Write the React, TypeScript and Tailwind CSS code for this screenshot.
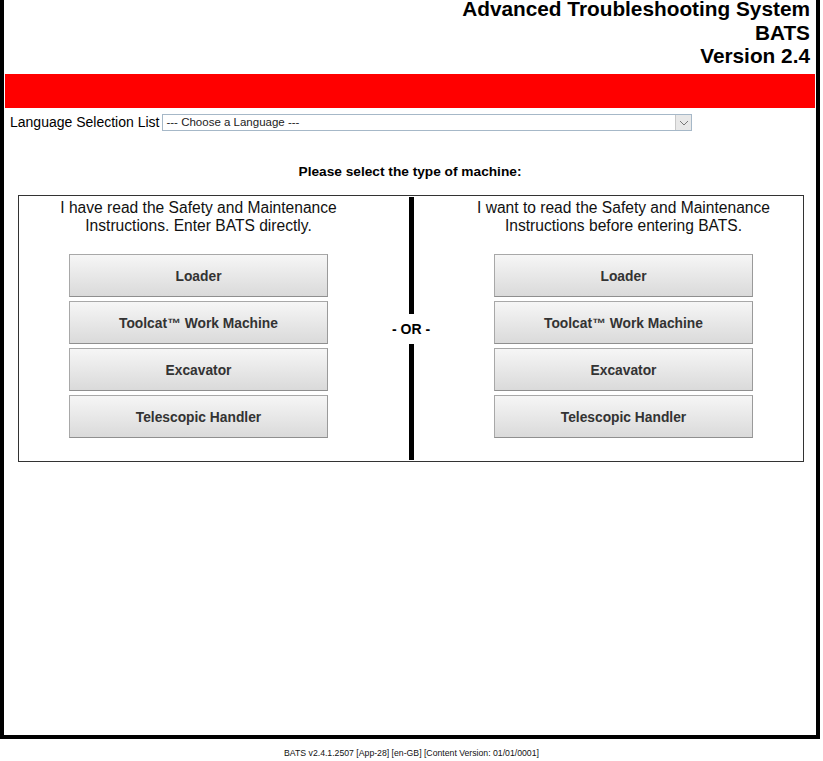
import React from 'react';

const MACHINES = ['Loader', 'Toolcat™ Work Machine', 'Excavator', 'Telescopic Handler'];

const MachineButton = ({ label }: { label: string }) => (
  <button
    type="button"
    className="w-[259px] h-[43px] pt-[3px] border border-[#a8a8a8] border-b-[#8f8f8f] border-r-[#9a9a9a] bg-gradient-to-b from-[#f6f6f6] to-[#dadada] text-[13.8px] font-bold text-[#333]"
  >
    {label}
  </button>
);

const Column = ({ lines }: { lines: [string, string] }) => (
  <div className="flex-1 flex flex-col items-center pt-[3px]">
    <p className="text-[15.6px] leading-[18px] text-[#111] text-center">
      {lines[0]}
      <br />
      {lines[1]}
    </p>
    <div className="mt-[19px] flex flex-col gap-[4px]">
      {MACHINES.map((m) => (
        <MachineButton key={m} label={m} />
      ))}
    </div>
  </div>
);

export default function App() {
  return (
    <div className="w-[823px] h-[761px] bg-white font-['Liberation_Sans',Arial,sans-serif] text-black">
      <div className="w-[820px] h-[739px] border-l-4 border-r-4 border-b-4 border-black flex flex-col">
        {/* title block */}
        <div className="h-[74px] pr-[6px] text-right text-[20.8px] font-bold leading-[23.5px]">
          <div className="leading-[18.5px]">Advanced Troubleshooting System</div>
          <div className="mt-[2px]">BATS</div>
          <div>Version 2.4</div>
        </div>
        <div className="h-[34px] mx-px bg-[#ff0000]" />

        {/* language picker */}
        <div className="flex items-center pl-[6px] pt-[6px] gap-[3px]">
          <span className="text-[14px] leading-[17px]">Language Selection List</span>
          <div className="w-[530px] h-[17px] border border-[#a6b8c8] flex items-center">
            <span className="flex-1 pl-[3px] text-[11.5px] leading-[15px] text-[#222]">--- Choose a Language ---</span>
            <span className="w-[16px] h-[15px] bg-[#e8e8e8] border-l border-[#c8c8c8] flex items-center justify-center">
              <svg width="10" height="6" viewBox="0 0 10 6" fill="none">
                <path d="M1 1l4 4 4-4" stroke="#777" strokeWidth="1" />
              </svg>
            </span>
          </div>
        </div>

        <p className="mt-[33px] text-center text-[13.7px] font-bold leading-[16px]">
          Please select the type of machine:
        </p>

        {/* machine choice table */}
        <div className="mt-[15px] ml-[14px] w-[786px] h-[267px] border border-[#333] flex">
          <Column lines={['I have read the Safety and Maintenance', 'Instructions. Enter BATS directly.']} />
          <div className="w-[66px] flex flex-col items-center py-[1px]">
            <div className="w-[5px] h-[117px] bg-black" />
            <div className="flex-1 flex items-center text-[14px] font-bold">- OR -</div>
            <div className="w-[5px] h-[116px] bg-black" />
          </div>
          <Column lines={['I want to read the Safety and Maintenance', 'Instructions before entering BATS.']} />
        </div>
      </div>
      <p className="mt-[9px] text-center text-[8.7px] leading-[11px] text-[#111]">
        BATS v2.4.1.2507 [App-28] [en-GB] [Content Version: 01/01/0001]
      </p>
    </div>
  );
}
